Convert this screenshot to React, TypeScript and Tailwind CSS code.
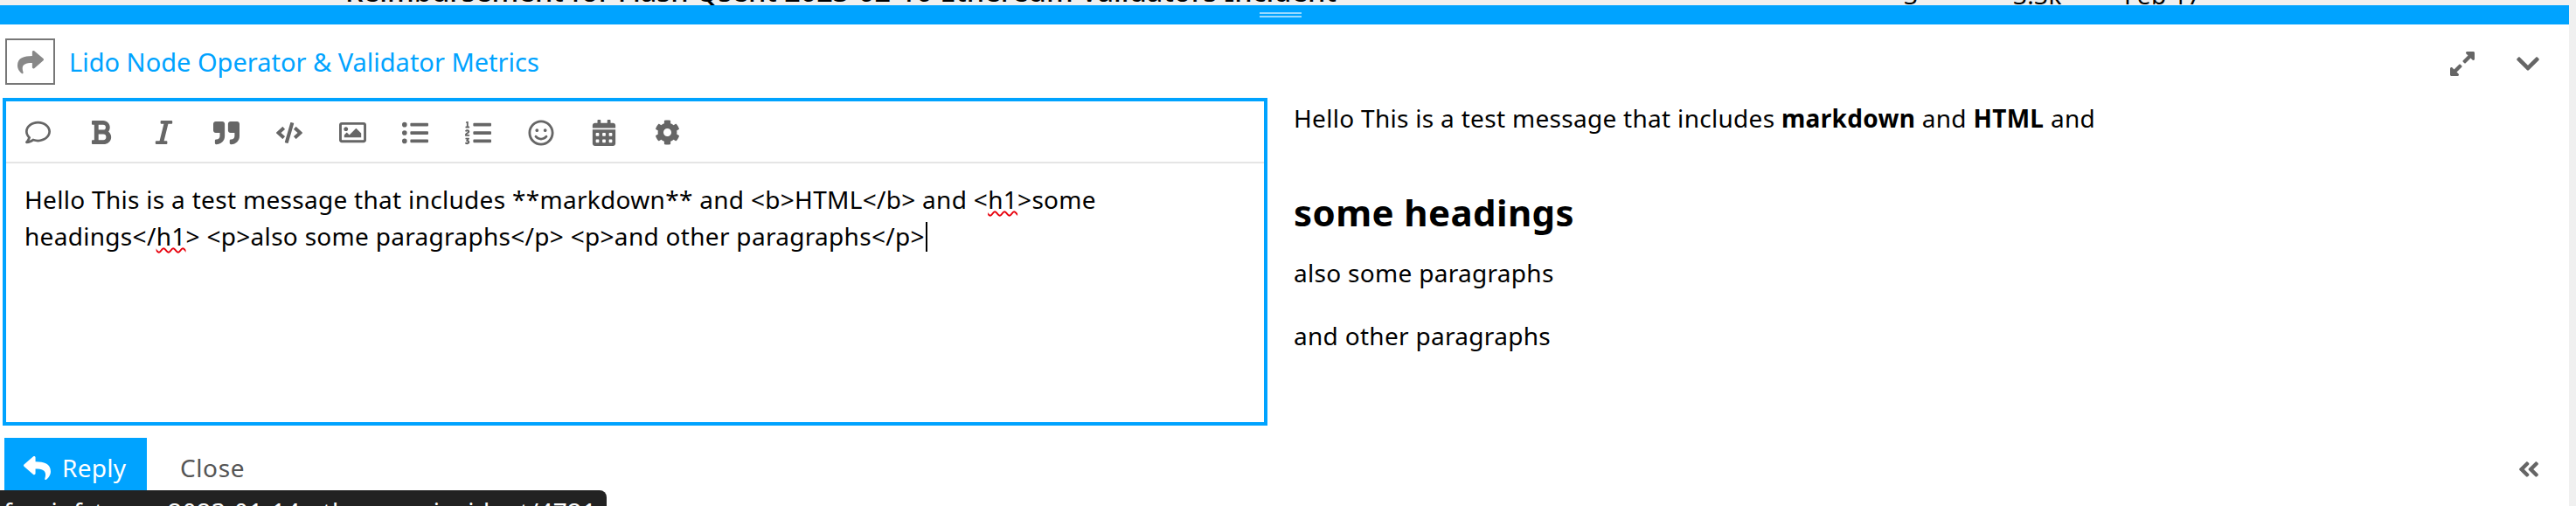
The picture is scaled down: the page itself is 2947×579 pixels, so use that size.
import {
  FaAngleDoubleLeft,
  FaBold,
  FaCalendarAlt,
  FaChevronDown,
  FaCode,
  FaCog,
  FaExpandAlt,
  FaItalic,
  FaListOl,
  FaListUl,
  FaQuoteRight,
  FaRegComment,
  FaRegImage,
  FaRegSmile,
  FaReply,
  FaShare,
} from 'react-icons/fa';

const font = 'font-["Noto_Sans","Open_Sans",sans-serif]';

// Barra de ferramentas do editor
const tools = [
  { icon: FaRegComment, size: 29 },
  { icon: FaBold, size: 31 },
  { icon: FaItalic, size: 31 },
  { icon: FaQuoteRight, size: 30 },
  { icon: FaCode, size: 30 },
  { icon: FaRegImage, size: 31 },
  { icon: FaListUl, size: 30 },
  { icon: FaListOl, size: 30 },
  { icon: FaRegSmile, size: 30 },
  { icon: FaCalendarAlt, size: 30 },
  { icon: FaCog, size: 29 },
];

function Misspelled({ children }: { children: string }) {
  return <span className="underline decoration-wavy decoration-red-600 decoration-2 underline-offset-2">{children}</span>;
}

export default function App() {
  return (
    <div className={`relative flex h-[579px] flex-col overflow-hidden bg-[#f0f0f0] text-[28px] tracking-[0.3px] text-black ${font}`}>
      <div className="flex h-[6px] overflow-hidden pl-[395px] leading-[28px]">
        <span className="-mt-[24px] w-[1783px] whitespace-nowrap text-[32.5px] font-medium tracking-normal">Reimbursement for Flash Qsent 2023-02-10 Ethereum Validators Incident</span>
        <span className="-mt-[20px] w-[125px]">3</span>
        <span className="-mt-[20px] w-[127px]">3.3k</span>
        <span className="-mt-[20px] whitespace-nowrap">Feb 17</span>
      </div>

      <div className="mr-[8px] flex flex-1 flex-col bg-white">
        <div className="flex h-[22px] flex-col items-center justify-center gap-[2px] bg-[#00a3ff] pr-[10px]">
          <div className="h-[2px] w-[48px] bg-white/60" />
          <div className="h-[2px] w-[48px] bg-white/60" />
        </div>

        <div className="flex h-[84px] items-start pt-[16px] pl-[6px] pr-[32px]">
          <div className="flex h-[53px] w-[57px] items-center justify-center border-2 border-[#777]">
            <FaShare size={30} className="text-[#888]" />
          </div>
          <a className="ml-[16px] mt-[9px] text-[29px] leading-[36px] tracking-normal whitespace-nowrap text-[#00a3ff]">Lido Node Operator &amp; Validator Metrics</a>
          <div className="ml-auto flex items-center gap-[44px] pt-[13px] text-[#666]">
            <FaExpandAlt size={32} />
            <FaChevronDown size={30} />
          </div>
        </div>

        <div className="flex h-[375px]">
          <div className="ml-[3px] flex w-[1447px] flex-col border-4 border-[#00a3ff]">
            <div className="flex h-[71px] shrink-0 items-center border-b-2 border-[#e5e5e5] pt-[2px] text-[#666]">
              {tools.map(({ icon: Icon, size }, i) => (
                <button key={i} type="button" className="flex h-full w-[72px] items-center justify-center">
                  <Icon size={size} />
                </button>
              ))}
            </div>
            <div className="pt-[20px] pl-[21px] leading-[42px] whitespace-nowrap">
              <div>
                Hello This is a test message that includes **markdown** and &lt;b&gt;HTML&lt;/b&gt; and &lt;<Misspelled>h1</Misspelled>&gt;some
              </div>
              <div className="flex">
                <span className="whitespace-pre">
                  headings&lt;/<Misspelled>h1</Misspelled>&gt; &lt;p&gt;also some paragraphs&lt;/p&gt; &lt;p&gt;and other paragraphs&lt;/p&gt;
                </span>
                <span className="ml-px mt-[5px] h-[34px] w-[2px] bg-black" />
              </div>
            </div>
          </div>

          <div className="pl-[30px] pt-[3px] leading-[40px]">
            <p>
              Hello This is a test message that includes <strong className="font-bold">markdown</strong> and <strong className="font-bold">HTML</strong> and
            </p>
            <h1 className="mt-[63px] text-[42px] font-bold leading-[50px] tracking-[0.4px]">some headings</h1>
            <p className="mt-[24px]">also some paragraphs</p>
            <p className="mt-[32px]">and other paragraphs</p>
          </div>
        </div>

        <div className="mt-[14px] flex items-start pl-[5px] pr-[32px]">
          <button type="button" className="flex h-[64px] w-[163px] items-center gap-[13px] bg-[#00a3ff] pt-[4px] pl-[22px] text-white">
            <FaReply size={31} />
            Reply
          </button>
          <button type="button" className="ml-[38px] h-[64px] pt-[4px] tracking-[0.6px] text-[#555]">Close</button>
          <FaAngleDoubleLeft size={28} className="ml-auto mt-[22px] text-[#666]" />
        </div>
      </div>

      <div className="absolute left-0 top-[561px] h-[40px] w-[694px] rounded-tr-lg bg-[#222] pl-[4px] pt-[6px] leading-[36px] tracking-[0.5px] whitespace-nowrap text-white">
        foo-infstages-2023-01-14-ethereum-incident/4721
      </div>
    </div>
  );
}
